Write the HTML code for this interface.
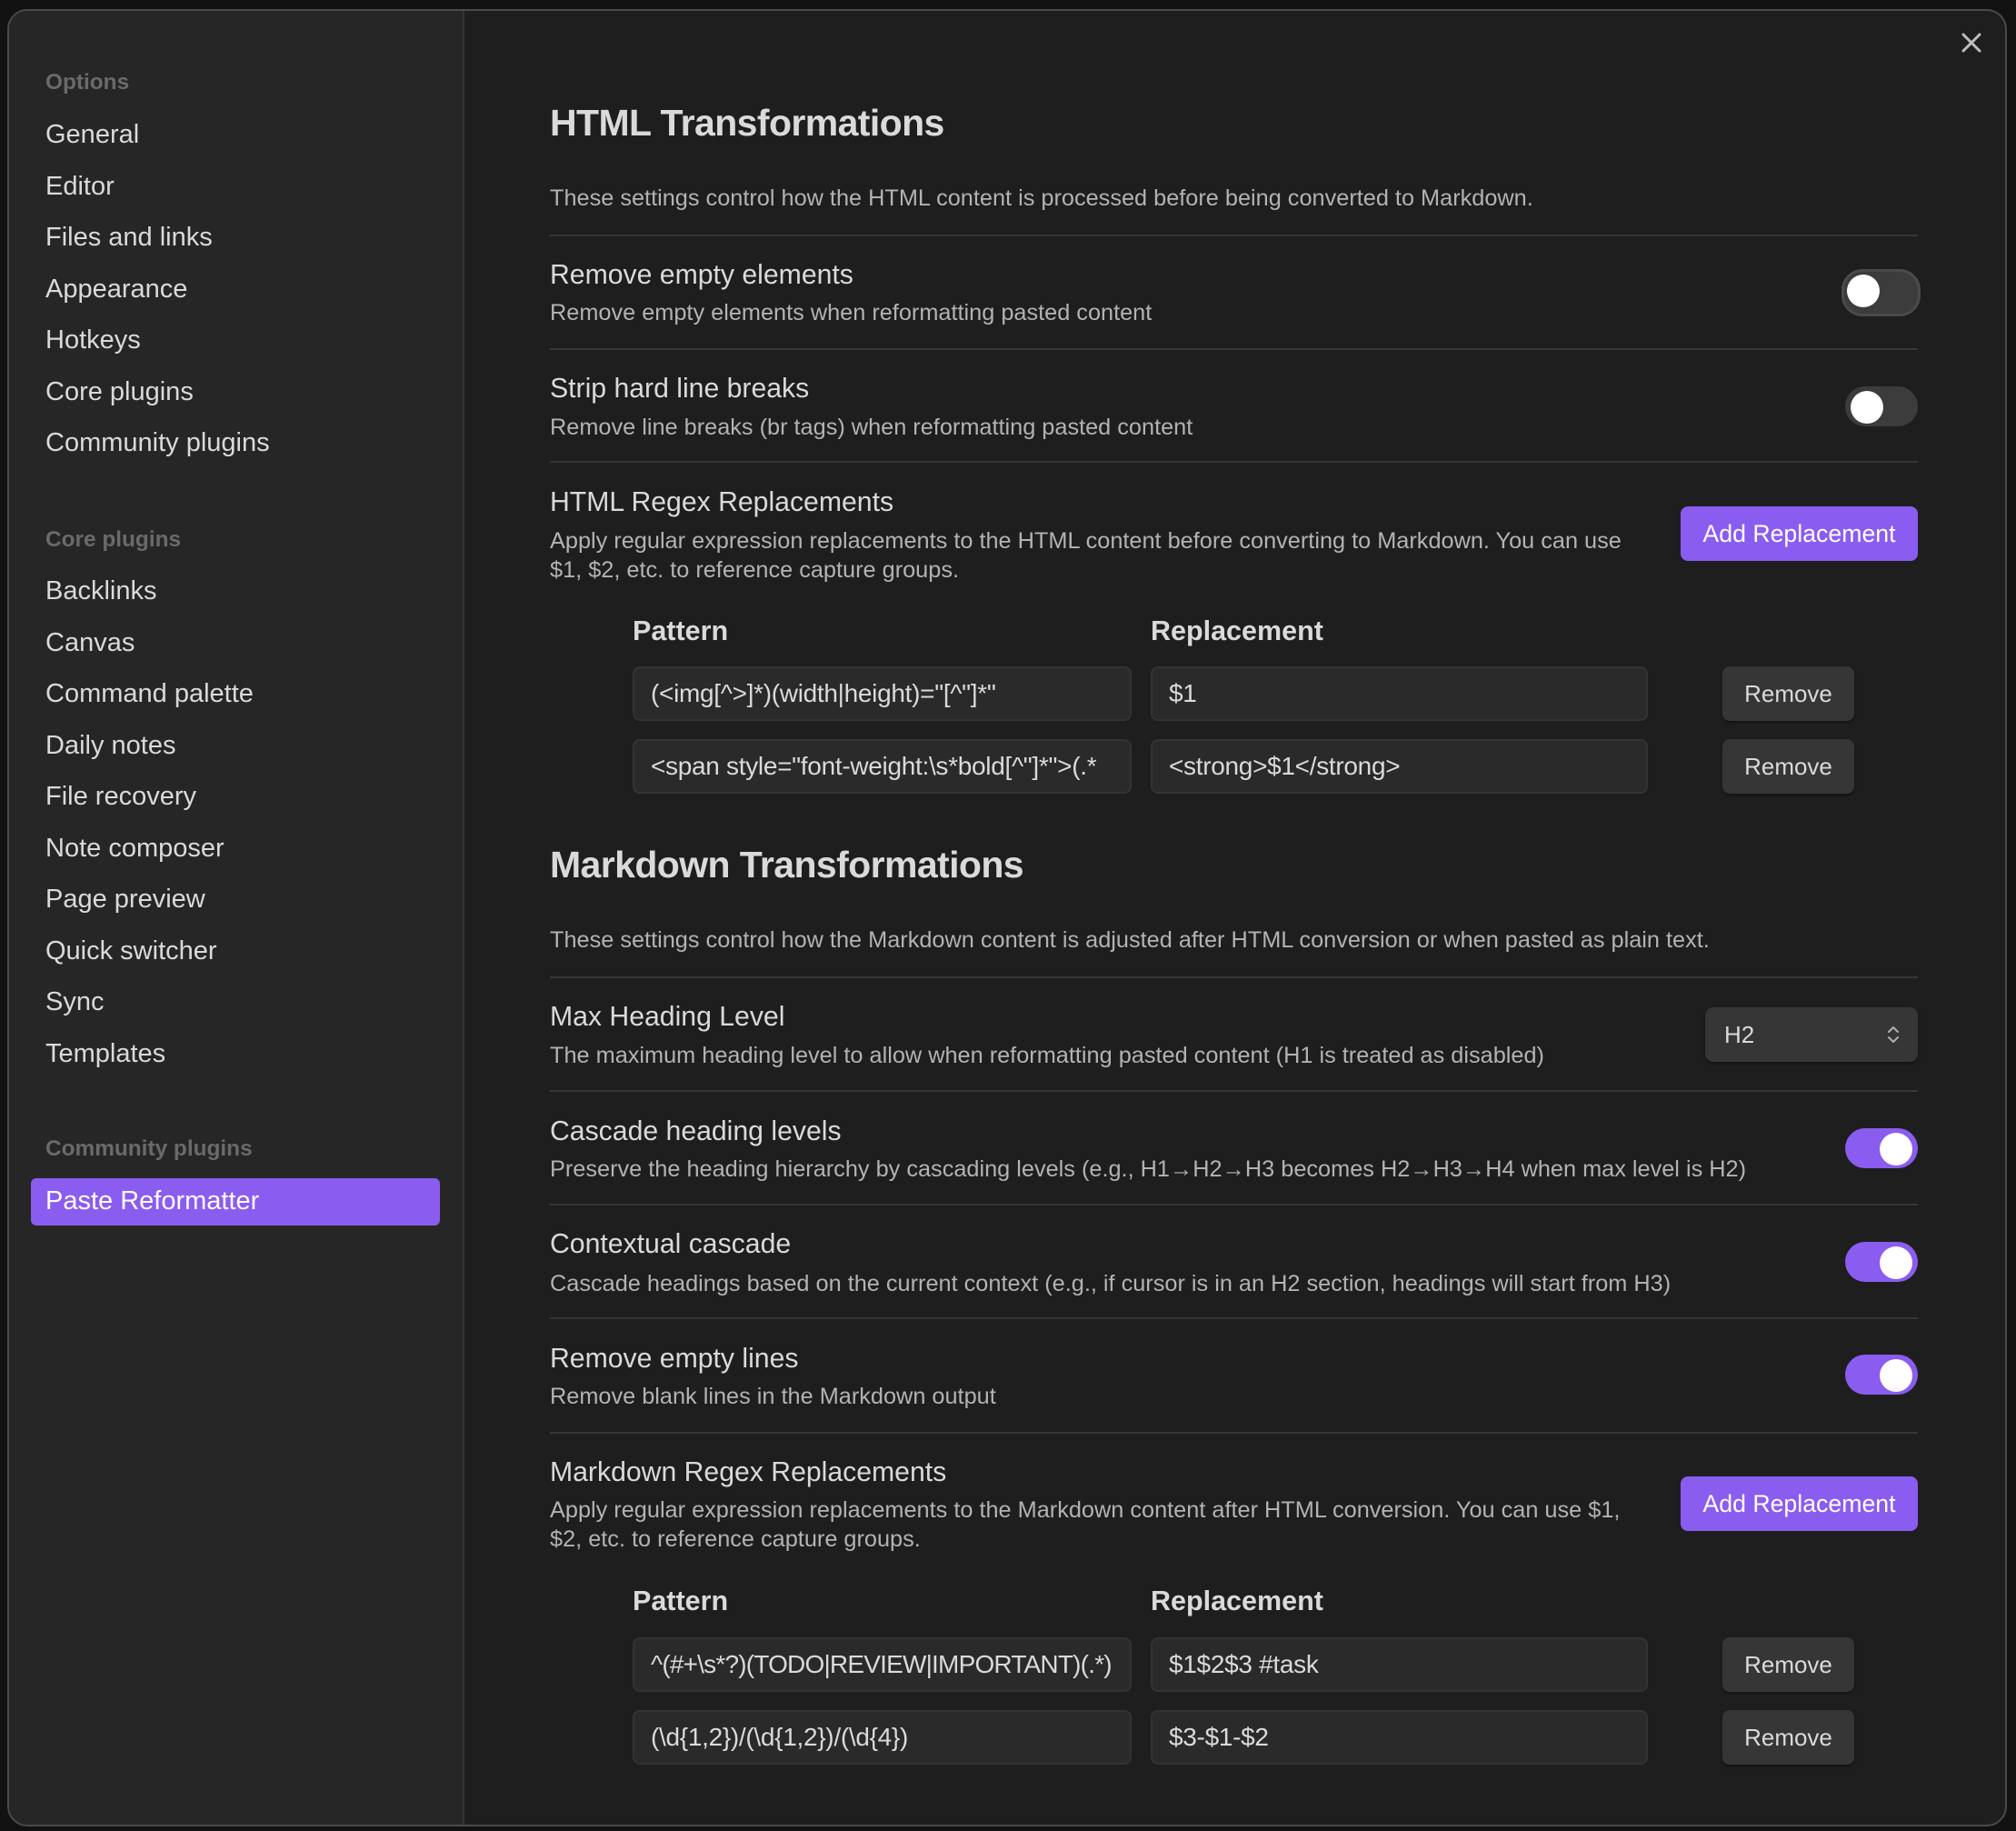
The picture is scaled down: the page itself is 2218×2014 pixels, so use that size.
<!DOCTYPE html>
<html><head><meta charset="utf-8"><style>
*{box-sizing:border-box;margin:0;padding:0}
body{width:2218px;height:2014px;background:#121212;font-family:"Liberation Sans",sans-serif;position:relative;overflow:hidden;color:#dadada}
.modal{position:absolute;left:8px;top:10px;width:2200px;height:1999px;border:2px solid #4a4a4a;border-radius:22px;background:#1e1e1e;overflow:hidden}
.side{position:absolute;left:0;top:0;width:501px;height:100%;background:#262626;border-right:2px solid #353535}
.t{position:absolute;line-height:40px;white-space:nowrap}
.s{font-size:29px;color:#dadada}
.sh{font-size:24.4px;color:#6a6a6a;font-weight:bold}
.n{font-size:30.2px;color:#dadada}
.d{font-size:25.3px;color:#b3b3b3}
.h1{font-size:41px;font-weight:bold;color:#dadada;letter-spacing:-0.6px}
.hr{position:absolute;left:605px;width:1505px;height:2px;background:#363636}
.tog{position:absolute;width:84px;height:46px;border-radius:23px;background:#3c3c3c}
.tog::after{content:"";position:absolute;top:5px;left:6px;width:36px;height:36px;border-radius:50%;background:#fff}
.tog.b{border:3px solid #4a4a4a}
.tog.b::after{top:3px;left:3px}
.tog.on{background:#8b5cf0}
.tog.on::after{left:auto;right:6px}
.btn{position:absolute;background:#8b5cf0;color:#fff;font-size:26.7px;border-radius:8px;text-align:center;line-height:60px}
.th{font-size:30.5px;font-weight:bold;color:#dadada}
.in{position:absolute;height:60px;background:#2a2a2a;border:2px solid #333;border-radius:8px;font-size:28px;letter-spacing:-0.3px;line-height:56px;padding-left:18px;color:#dadada;white-space:nowrap;overflow:hidden}
.rm{position:absolute;width:145px;height:60px;background:#363636;border-radius:8px;font-size:26px;line-height:60px;text-align:center;color:#dadada;box-shadow:0 2px 3px rgba(0,0,0,.4)}
</style></head><body>
<div class="modal">
<div class="side"></div>
</div>
<div class="t sh" style="left:50px;top:71px">Options</div>
<div class="t s" style="left:50px;top:128px">General</div>
<div class="t s" style="left:50px;top:185px">Editor</div>
<div class="t s" style="left:50px;top:241px">Files and links</div>
<div class="t s" style="left:50px;top:298px">Appearance</div>
<div class="t s" style="left:50px;top:354px">Hotkeys</div>
<div class="t s" style="left:50px;top:411px">Core plugins</div>
<div class="t s" style="left:50px;top:467px">Community plugins</div>
<div class="t sh" style="left:50px;top:574px">Core plugins</div>
<div class="t s" style="left:50px;top:630px">Backlinks</div>
<div class="t s" style="left:50px;top:687px">Canvas</div>
<div class="t s" style="left:50px;top:743px">Command palette</div>
<div class="t s" style="left:50px;top:800px">Daily notes</div>
<div class="t s" style="left:50px;top:856px">File recovery</div>
<div class="t s" style="left:50px;top:913px">Note composer</div>
<div class="t s" style="left:50px;top:969px">Page preview</div>
<div class="t s" style="left:50px;top:1026px">Quick switcher</div>
<div class="t s" style="left:50px;top:1082px">Sync</div>
<div class="t s" style="left:50px;top:1139px">Templates</div>
<div class="t sh" style="left:50px;top:1244px">Community plugins</div>
<div style="position:absolute;left:34px;top:1296px;width:450px;height:52px;background:#8b5cf0;border-radius:6px"></div>
<div class="t s" style="left:50px;top:1301px;color:#fff">Paste Reformatter</div>
<svg style="position:absolute;left:2157px;top:35px" width="24" height="24" viewBox="0 0 24 24"><path d="M3 3L21 21M21 3L3 21" stroke="#bdbdbd" stroke-width="3" stroke-linecap="round"/></svg>
<div class="t h1" style="left:605px;top:115px">HTML Transformations</div>
<div class="t d" style="left:605px;top:198px">These settings control how the HTML content is processed before being converted to Markdown.</div>
<div class="hr" style="top:258px"></div>
<div class="t n" style="left:605px;top:283px">Remove empty elements</div>
<div class="t d" style="left:605px;top:324px">Remove empty elements when reformatting pasted content</div>
<div class="tog b" style="left:2026px;top:296px;width:87px;height:52px"></div>
<div class="hr" style="top:383px"></div>
<div class="t n" style="left:605px;top:408px">Strip hard line breaks</div>
<div class="t d" style="left:605px;top:450px">Remove line breaks (br tags) when reformatting pasted content</div>
<div class="tog" style="left:2030px;top:425px;width:80px;height:44px"></div>
<div class="hr" style="top:507px"></div>
<div class="t n" style="left:605px;top:533px">HTML Regex Replacements</div>
<div class="t d" style="left:605px;top:575px">Apply regular expression replacements to the HTML content before converting to Markdown. You can use</div>
<div class="t d" style="left:605px;top:607px">$1, $2, etc. to reference capture groups.</div>
<div class="btn" style="left:1849px;top:557px;width:261px;height:60px">Add Replacement</div>
<div class="t th" style="left:696px;top:674px">Pattern</div>
<div class="t th" style="left:1266px;top:674px">Replacement</div>
<div class="in" style="left:696px;top:733px;width:549px">(&lt;img[^&gt;]*)(width|height)="[^"]*"</div>
<div class="in" style="left:1266px;top:733px;width:547px">$1</div>
<div class="rm" style="left:1895px;top:733px">Remove</div>
<div class="in" style="left:696px;top:813px;width:549px">&lt;span style="font-weight:\s*bold[^"]*"&gt;(.*</div>
<div class="in" style="left:1266px;top:813px;width:547px">&lt;strong&gt;$1&lt;/strong&gt;</div>
<div class="rm" style="left:1895px;top:813px">Remove</div>
<div class="t h1" style="left:605px;top:931px">Markdown Transformations</div>
<div class="t d" style="left:605px;top:1014px">These settings control how the Markdown content is adjusted after HTML conversion or when pasted as plain text.</div>
<div class="hr" style="top:1074px"></div>
<div class="t n" style="left:605px;top:1099px">Max Heading Level</div>
<div class="t d" style="left:605px;top:1141px">The maximum heading level to allow when reformatting pasted content (H1 is treated as disabled)</div>
<div style="position:absolute;left:1876px;top:1108px;width:234px;height:60px;background:#363636;border-radius:9px;box-shadow:0 2px 3px rgba(0,0,0,.4)"></div>
<div class="t" style="left:1897px;top:1118px;font-size:26px;color:#dadada">H2</div>
<svg style="position:absolute;left:2074px;top:1126px" width="18" height="24" viewBox="0 0 18 24"><path d="M4 9L9 4L14 9M4 15L9 20L14 15" stroke="#b0b0b0" stroke-width="2" fill="none" stroke-linecap="round" stroke-linejoin="round"/></svg>
<div class="hr" style="top:1199px"></div>
<div class="t n" style="left:605px;top:1225px">Cascade heading levels</div>
<div class="t d" style="left:605px;top:1266px">Preserve the heading hierarchy by cascading levels (e.g., H1→H2→H3 becomes H2→H3→H4 when max level is H2)</div>
<div class="tog on" style="left:2030px;top:1241px;width:80px;height:44px"></div>
<div class="hr" style="top:1324px"></div>
<div class="t n" style="left:605px;top:1349px">Contextual cascade</div>
<div class="t d" style="left:605px;top:1392px">Cascade headings based on the current context (e.g., if cursor is in an H2 section, headings will start from H3)</div>
<div class="tog on" style="left:2030px;top:1366px;width:80px;height:44px"></div>
<div class="hr" style="top:1449px"></div>
<div class="t n" style="left:605px;top:1475px">Remove empty lines</div>
<div class="t d" style="left:605px;top:1516px">Remove blank lines in the Markdown output</div>
<div class="tog on" style="left:2030px;top:1490px;width:80px;height:44px"></div>
<div class="hr" style="top:1575px"></div>
<div class="t n" style="left:605px;top:1600px">Markdown Regex Replacements</div>
<div class="t d" style="left:605px;top:1641px">Apply regular expression replacements to the Markdown content after HTML conversion. You can use $1,</div>
<div class="t d" style="left:605px;top:1673px">$2, etc. to reference capture groups.</div>
<div class="btn" style="left:1849px;top:1624px;width:261px;height:60px">Add Replacement</div>
<div class="t th" style="left:696px;top:1741px">Pattern</div>
<div class="t th" style="left:1266px;top:1741px">Replacement</div>
<div class="in" style="left:696px;top:1801px;width:549px;letter-spacing:-0.8px">^(#+\s*?)(TODO|REVIEW|IMPORTANT)(.*)</div>
<div class="in" style="left:1266px;top:1801px;width:547px">$1$2$3 #task</div>
<div class="rm" style="left:1895px;top:1801px">Remove</div>
<div class="in" style="left:696px;top:1881px;width:549px">(\d{1,2})/(\d{1,2})/(\d{4})</div>
<div class="in" style="left:1266px;top:1881px;width:547px">$3-$1-$2</div>
<div class="rm" style="left:1895px;top:1881px">Remove</div>
</body></html>
